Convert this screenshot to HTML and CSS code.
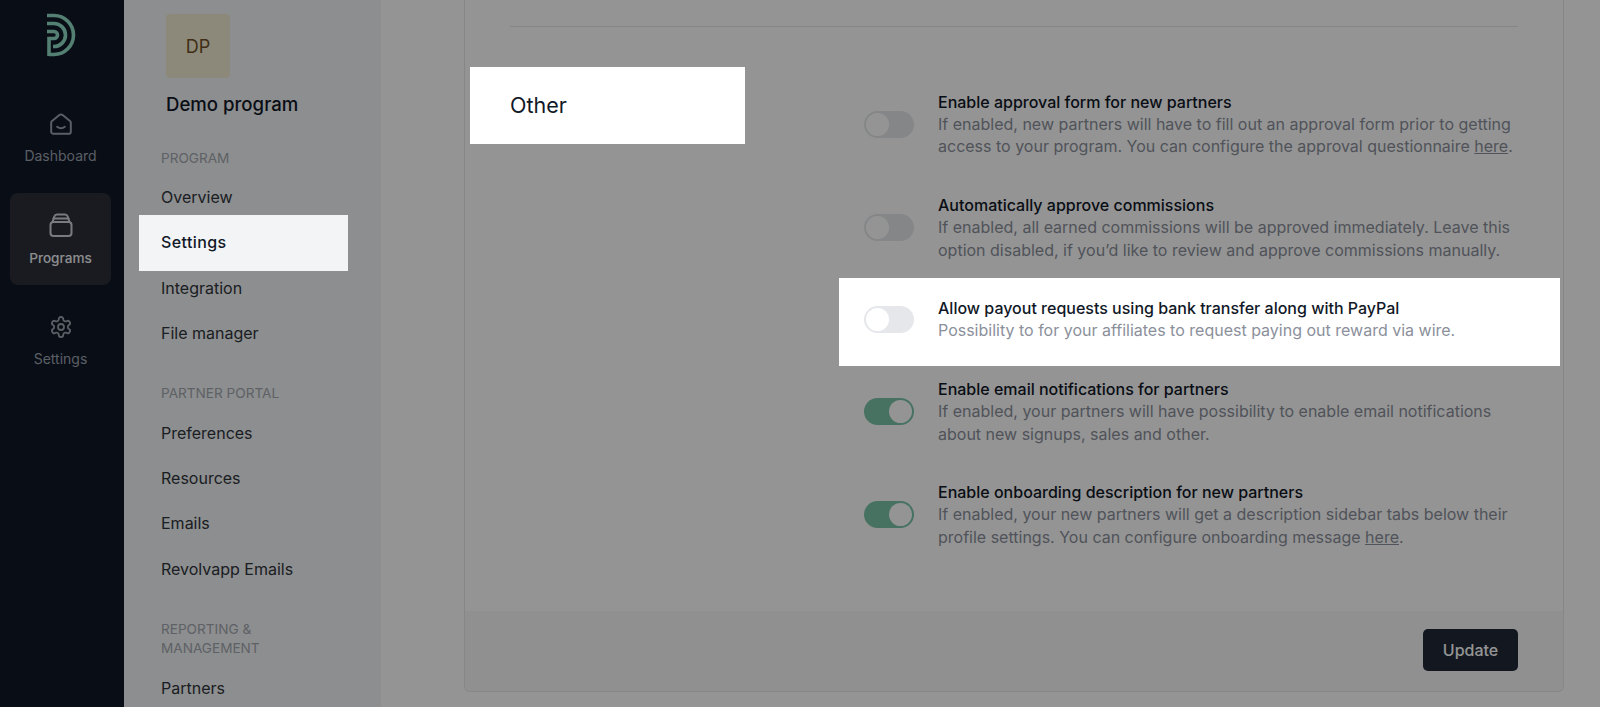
FILE: index.html
```html
<!DOCTYPE html>
<html lang="en">
<head>
<meta charset="utf-8">
<title>Program settings</title>
<link rel="stylesheet" href="styles.css">
</head>
<body>
<div class="app">
  <aside class="rail">
    <svg class="logo" viewBox="0 0 32 44" fill="none" stroke-width="3.6">
      <path d="M0 2.5H7A19.5 19.5 0 0 1 7 41.5H2"/>
      <path d="M0 10.5H7A11.5 11.5 0 0 1 7 33.5H6"/>
      <path d="M0 18.5H7A3.5 3.5 0 0 1 7 25.5H2V43"/>
    </svg>
    <nav class="rail-nav">
      <a class="rail-item">
        <svg class="rail-icon" viewBox="1 1 22 22" fill="none">
          <path d="M3 10.8c0-.6.3-1.200.8-1.600l6.700-5.400a2.400 2.400 0 0 1 3 0l6.700 5.400c.5.400.8 1 .8 1.600V19a2 2 0 0 1-2 2H5a2 2 0 0 1-2-2z"/>
          <path d="M8.500 14.500c2 1.500 5 1.500 7 0"/>
        </svg>
        <span>Dashboard</span>
      </a>
      <a class="rail-item rail-active">
        <svg class="rail-icon" viewBox="0 0 24 24" fill="none">
          <rect x="1.500" y="9" width="21" height="14" rx="3"/>
          <path d="M3.500 9l1.800-5.500A3 3 0 0 1 8.100 1.500h7.800a3 3 0 0 1 2.800 2L20.500 9"/>
          <path d="M4.500 5.500h15"/>
        </svg>
        <span>Programs</span>
      </a>
      <a class="rail-item">
        <svg class="rail-icon" viewBox="0 0 24 24" fill="none">
          <path d="M12.220 2h-.44a2 2 0 0 0-2 2v.18a2 2 0 0 1-1 1.730l-.43.25a2 2 0 0 1-2 0l-.15-.08a2 2 0 0 0-2.730.73l-.22.38a2 2 0 0 0 .73 2.730l.15.1a2 2 0 0 1 1 1.720v.51a2 2 0 0 1-1 1.740l-.15.09a2 2 0 0 0-.73 2.730l.22.38a2 2 0 0 0 2.730.73l.15-.08a2 2 0 0 1 2 0l.43.25a2 2 0 0 1 1 1.730V20a2 2 0 0 0 2 2h.44a2 2 0 0 0 2-2v-.18a2 2 0 0 1 1-1.730l.43-.25a2 2 0 0 1 2 0l.15.08a2 2 0 0 0 2.730-.73l.22-.39a2 2 0 0 0-.73-2.730l-.15-.08a2 2 0 0 1-1-1.740v-.5a2 2 0 0 1 1-1.740l.15-.09a2 2 0 0 0 .73-2.730l-.22-.38a2 2 0 0 0-2.730-.73l-.15.08a2 2 0 0 1-2 0l-.43-.25a2 2 0 0 1-1-1.730V4a2 2 0 0 0-2-2z"/>
          <circle cx="12" cy="12" r="3"/>
        </svg>
        <span>Settings</span>
      </a>
    </nav>
  </aside>

  <aside class="subnav">
    <div class="avatar">DP</div>
    <h2 class="program-name">Demo program</h2>

    <h3 class="group-label">Program</h3>
    <a class="sub-item">Overview</a>
    <a class="sub-item sub-active">Settings</a>
    <a class="sub-item">Integration</a>
    <a class="sub-item">File manager</a>

    <h3 class="group-label">Partner portal</h3>
    <a class="sub-item">Preferences</a>
    <a class="sub-item">Resources</a>
    <a class="sub-item">Emails</a>
    <a class="sub-item">Revolvapp Emails</a>

    <h3 class="group-label">Reporting &amp; management</h3>
    <a class="sub-item">Partners</a>
  </aside>

  <main class="main">
    <div class="card">
      <div class="card-body">
        <hr class="divider">
        <section class="section">
          <h2 class="section-title">Other</h2>
          <div class="options">
            <div class="option">
              <span class="toggle"><span class="knob"></span></span>
              <div class="option-text">
                <div class="option-title">Enable approval form for new partners</div>
                <p class="option-desc">If enabled, new partners will have to fill out an approval form prior to getting access to your program. You can configure the approval questionnaire <a class="link">here</a>.</p>
              </div>
            </div>
            <div class="option">
              <span class="toggle"><span class="knob"></span></span>
              <div class="option-text">
                <div class="option-title">Automatically approve commissions</div>
                <p class="option-desc">If enabled, all earned commissions will be approved immediately. Leave this option disabled, if you’d like to review and approve commissions manually.</p>
              </div>
            </div>
            <div class="option option-spot">
              <span class="toggle"><span class="knob"></span></span>
              <div class="option-text">
                <div class="option-title">Allow payout requests using bank transfer along with PayPal</div>
                <p class="option-desc">Possibility to for your affiliates to request paying out reward via wire.</p>
              </div>
            </div>
            <div class="option">
              <span class="toggle toggle-on"><span class="knob"></span></span>
              <div class="option-text">
                <div class="option-title">Enable email notifications for partners</div>
                <p class="option-desc">If enabled, your partners will have possibility to enable email notifications about new signups, sales and other.</p>
              </div>
            </div>
            <div class="option">
              <span class="toggle toggle-on"><span class="knob"></span></span>
              <div class="option-text">
                <div class="option-title">Enable onboarding description for new partners</div>
                <p class="option-desc">If enabled, your new partners will get a description sidebar tabs below their profile settings. You can configure onboarding message <a class="link">here</a>.</p>
              </div>
            </div>
          </div>
        </section>
      </div>
      <footer class="card-footer">
        <button class="btn" type="button">Update</button>
      </footer>
    </div>
  </main>
</div>
<div class="scrim"></div>
</body>
</html>
```

FILE: styles.css
```css
* {
  box-sizing: border-box;
}

html,
body {
  margin: 0;
  height: 707px;
  overflow: hidden;
}

body {
  font-family: Inter, "Liberation Sans", sans-serif;
  color: #111827;
  background: #fff;
}

h2,
h3,
p {
  margin: 0;
}

.scrim {
  position: fixed;
  inset: 0;
  z-index: 10;
  background: rgba(0, 0, 0, 0.42);
}

.app {
  display: flex;
  height: 707px;
}

/* Left rail */
.rail {
  flex: 0 0 124px;
  background: #111827;
  padding: 13px 13px 0 10px;
}

.logo {
  display: block;
  width: 32px;
  height: 44px;
  margin-left: 37px;
  stroke: #8fdcc4;
}

.rail-nav {
  display: flex;
  flex-direction: column;
  gap: 9.5px;
  margin-top: 34.5px;
}

.rail-item {
  display: flex;
  flex-direction: column;
  align-items: center;
  height: 92px;
  padding-top: 20px;
  border-radius: 8px;
  font-size: 14px;
  line-height: 20px;
  color: #9ca3af;
}

.rail-item span {
  margin-top: 10.500px;
}

.rail-active {
  background: #2b3039;
  color: #f3f4f6;
  font-size: 13.600px;
  font-weight: 500;
}

.rail-active span {
  margin-top: 11px;
}

.rail-icon {
  width: 24px;
  height: 24px;
  stroke: #9ca3af;
  stroke-width: 1.800;
  stroke-linecap: round;
  stroke-linejoin: round;
}

.rail-active .rail-icon {
  stroke: #d1d5db;
  stroke-width: 2;
}

/* Secondary sidebar */
.subnav {
  flex: 0 0 257px;
  background: #f3f4f6;
  padding: 14px 33px 0 15px;
  overflow: hidden;
}

.avatar {
  display: flex;
  align-items: center;
  justify-content: center;
  width: 64px;
  height: 64px;
  margin-left: 27px;
  border-radius: 4px;
  background: #f1edd2;
  color: #6e4f28;
  font-size: 18px;
}

.program-name {
  margin: 12px 0 30.500px 27px;
  font-size: 18.600px;
  line-height: 28px;
  font-weight: 500;
  color: #111827;
}

.group-label {
  margin: 28.500px 0 7px;
  padding: 0 30px 0 22px;
  font-size: 13.600px;
  line-height: 19px;
  font-weight: 400;
  text-transform: uppercase;
  color: #a3a8b0;
}

.sub-item {
  display: flex;
  align-items: center;
  height: 45.300px;
  padding-left: 22px;
  font-size: 16px;
  color: #30343c;
}

.sub-active {
  position: relative;
  z-index: 20;
  height: 56.500px;
  margin: -5px 0 -6.200px;
  padding-bottom: 2px;
  background: #f3f4f6;
  font-weight: 500;
  letter-spacing: 0.4px;
  color: #111827;
}

/* Main */
.main {
  flex: 1;
  display: flex;
  padding: 0 36px 15px 83px;
  background: #fff;
}

.card {
  flex: 1;
  display: flex;
  flex-direction: column;
  background: #fff;
  border: 1px solid #e5e7eb;
  border-top: 0;
  border-radius: 0 0 6px 6px;
}

.card-body {
  flex: 1;
  padding: 26px 45px 0 45px;
}

.divider {
  margin: 0;
  border: 0;
  border-top: 1px solid #e5e7eb;
}

.section {
  display: grid;
  grid-template-columns: 354px 1fr;
  align-items: start;
  padding-top: 40px;
}

.section-title {
  position: relative;
  z-index: 20;
  width: 275px;
  height: 76.500px;
  margin-left: -40px;
  padding-left: 40px;
  display: flex;
  align-items: center;
  background: #fff;
  font-size: 21.500px;
  font-weight: 400;
  color: #111827;
}

.options {
  display: flex;
  flex-direction: column;
  gap: 36px;
  padding-top: 23.500px;
}

.option {
  display: flex;
  align-items: center;
  gap: 24px;
}

.option-spot {
  position: relative;
  z-index: 20;
  margin: -19px -42px -24px -25px;
  padding: 19px 42px 24px 25px;
  background: #fff;
}

.option-text {
  flex: 1;
  font-size: 16px;
  line-height: 22.400px;
}

.option-title {
  font-weight: 500;
  color: #111827;
}

.option-desc {
  color: #8b909b;
}

.link {
  color: #8b909b;
  text-decoration: underline;
}

.toggle {
  flex: 0 0 50px;
  display: flex;
  height: 27px;
  padding: 2px;
  border-radius: 14px;
  background: #e5e7eb;
}

.toggle-on {
  justify-content: flex-end;
  background: #7bc5aa;
}

.knob {
  width: 23px;
  height: 23px;
  border-radius: 50%;
  background: #fff;
}

/* Footer */
.card-footer {
  display: flex;
  justify-content: flex-end;
  height: 80px;
  padding: 18px 45px 0 0;
  background: #f9f9fa;
  border-radius: 0 0 6px 6px;
}

.btn {
  width: 95px;
  height: 42px;
  border: 0;
  border-radius: 5px;
  background: #1f2937;
  color: #fff;
  font: 500 16px Inter, "Liberation Sans", sans-serif;
}
```
